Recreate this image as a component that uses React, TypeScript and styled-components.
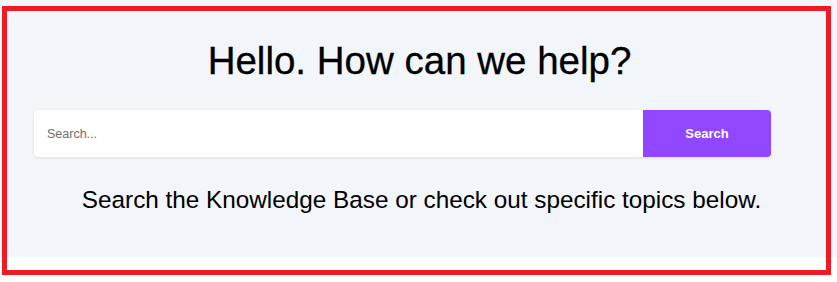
import styled, { createGlobalStyle } from "styled-components";

const GlobalStyle = createGlobalStyle`
  html, body {
    margin: 0;
    padding: 0;
    background: #ffffff;
  }
  body {
    font-family: "Liberation Sans", Arial, sans-serif;
  }
`;

const App = () => {
  return (
    <Page>
      <GlobalStyle />
      <Hero>
        <Title>Hello. How can we help?</Title>
        <SearchForm onSubmit={(e) => e.preventDefault()}>
          <SearchInput type="text" placeholder="Search..." />
          <SearchBtn type="submit">Search</SearchBtn>
        </SearchForm>
        <Ment>Search the Knowledge Base or check out specific topics below.</Ment>
      </Hero>
      <Highlight />
    </Page>
  );
};

/* STYLE */
const Page = styled.div`
  position: relative;
  width: 837px;
  height: 282px;
  background: #ffffff;
`;

const Hero = styled.section`
  height: 257px;
  box-sizing: border-box;
  padding-top: 38px;
  background: #f2f5f9;
  display: flex;
  flex-direction: column;
`;

const Title = styled.h1`
  margin: 0;
  text-align: center;
  font-size: 38.5px;
  line-height: 46px;
  font-weight: 400;
  color: #000;
  padding-left: 2px;
  -webkit-text-stroke: 0.3px #000;
`;

const SearchForm = styled.form`
  margin: 26px 0 0 34px;
  width: 737px;
  height: 47px;
  display: flex;
  border-radius: 4px;
  overflow: hidden;
  background: #ffffff;
  box-shadow: 0 1px 3px rgba(20, 30, 60, 0.1);
`;

const SearchInput = styled.input`
  flex: 1;
  border: none;
  outline: none;
  padding: 0 0 0 13px;
  font-family: "Liberation Sans", Arial, sans-serif;
  font-size: 12.5px;
  color: #333;
  background: transparent;

  &::placeholder {
    color: #6e6e6e;
  }
`;

const SearchBtn = styled.button`
  width: 128px;
  border: none;
  background: #9146ff;
  color: #ffffff;
  font-family: "Liberation Sans", Arial, sans-serif;
  font-size: 13px;
  font-weight: 700;
  cursor: pointer;
`;

const Ment = styled.p`
  margin: 29px 0 0;
  text-align: center;
  font-size: 24.3px;
  line-height: 28px;
  color: #000;
  padding-left: 6px;
`;

const Highlight = styled.div`
  position: absolute;
  left: 2px;
  top: 6px;
  width: 829px;
  height: 269px;
  box-sizing: border-box;
  border: 5px solid #ed1c24;
  pointer-events: none;
`;

export default App;
